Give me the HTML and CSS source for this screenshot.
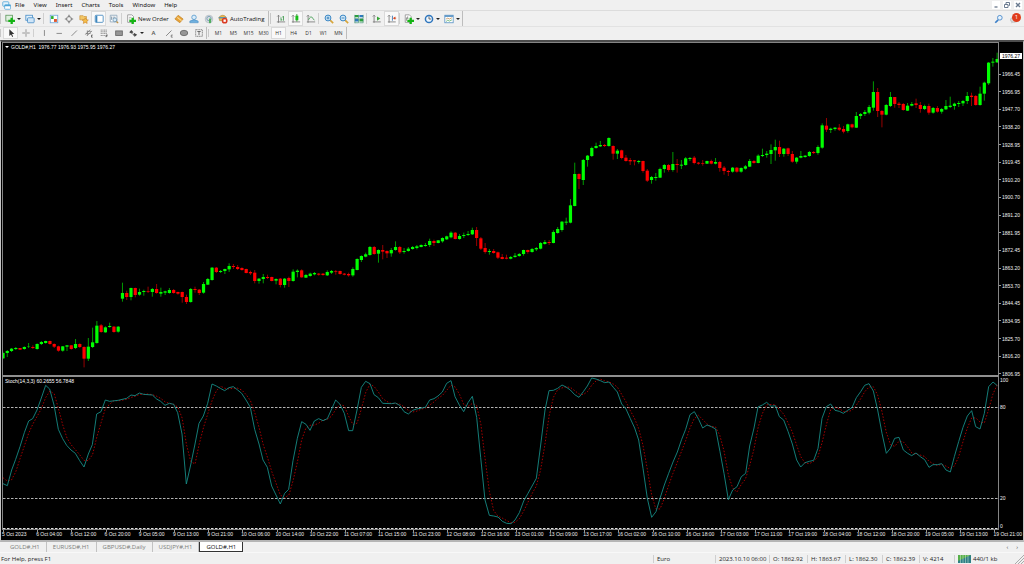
FILE: index.html
```html
<!DOCTYPE html>
<html lang="en">
<head>
<meta charset="utf-8">
<title>GOLD#,H1</title>
<link rel="stylesheet" href="styles.css">
</head>
<body>
<header class="menubar">
  <svg class="app-icon" viewBox="0 0 12 12"><rect x="1" y="1" width="8" height="6" rx="1" fill="#e3f3fc" stroke="#4aa3d6"/><rect x="3.500" y="5" width="8" height="6" rx="1" fill="#fff" stroke="#4aa3d6"/><path d="M3.500 6h8" stroke="#4aa3d6" stroke-width="2"/></svg>
  <nav class="menus">
    <button>File</button><button>View</button><button>Insert</button><button>Charts</button><button>Tools</button><button>Window</button><button>Help</button>
  </nav>
  <div class="window-buttons">
    <button aria-label="Minimize"><svg viewBox="0 0 8 8"><path d="M2.500 6h3" stroke="#5b6b80" stroke-width="1.200"/></svg></button>
    <button aria-label="Restore"><svg viewBox="0 0 8 8"><path d="M3 3V1.500h3.500v3H5.500M1.500 3.500H5v3H1.500z" fill="none" stroke="#6b7b90"/></svg></button>
    <button aria-label="Close"><svg viewBox="0 0 8 8"><path d="M2 2l4 4M6 2L2 6" stroke="#6b7b90" stroke-width="1.400"/></svg></button>
  </div>
</header>

<div class="toolbar main-tools">
  <span class="grip"></span>
  <button class="tool drop" aria-label="New chart"><svg viewBox="0 0 12 12"><rect x="1" y="1.500" width="8" height="7" fill="#dff0df" stroke="#5f9a5f"/><path d="M8 4.500v7.500M4 8.300h8" stroke="#14b414" stroke-width="2.800"/></svg></button>
  <button class="tool drop" aria-label="Profiles"><svg viewBox="0 0 12 12"><rect x="1" y="1.500" width="8" height="6" fill="#e4f1fb" stroke="#4a8fc8"/><rect x="3" y="4.500" width="8" height="6" rx="1" fill="#cfe5f7" stroke="#4a8fc8"/></svg></button>
  <span class="sep"></span>
  <button class="tool" aria-label="Market watch"><svg viewBox="0 0 12 12"><rect x="1.500" y="1.500" width="9" height="9" fill="#fff" stroke="#6fa9d8"/><rect x="2.500" y="2.500" width="3" height="3.500" fill="#2cae2c"/><rect x="6" y="6" width="3.500" height="3.500" fill="#e0562c"/></svg></button>
  <button class="tool" aria-label="Data window"><svg viewBox="0 0 12 12"><circle cx="6" cy="6" r="3" fill="none" stroke="#777"/><path d="M6 1v3M6 8v3M1 6h3M8 6h3" stroke="#777" stroke-width="1.400"/></svg></button>
  <button class="tool" aria-label="Navigator"><svg viewBox="0 0 12 12"><path d="M1 2h4l1 1h3v4H1z" fill="#f3c766" stroke="#c58a2b" stroke-width=".7"/><path d="M7.500 4.500l1.200 2.300 2.500.4-1.800 1.700.4 2.400-2.300-1.200-2.300 1.200.4-2.400-1.800-1.700 2.500-.4z" fill="#f6bf4a" stroke="#c9822a" stroke-width=".7"/></svg></button>
  <button class="tool pressed" aria-label="Terminal"><svg viewBox="0 0 12 12"><rect x="1.500" y="1.500" width="9.500" height="8.500" rx="1" fill="#fff" stroke="#3e86bd"/><path d="M3 2v8" stroke="#3e86bd" stroke-width="2"/></svg></button>
  <button class="tool" aria-label="Strategy tester"><svg viewBox="0 0 12 12"><path d="M1.500 1.500h8v8h-8z" fill="#fff" stroke="#8aa4b8"/><path d="M3 3v4M5 3v3M7 3v2" stroke="#7d93a5"/><circle cx="7" cy="7" r="2.300" fill="#d6ebf8" stroke="#6d94b0"/><path d="M9 9l2 2" stroke="#c09040" stroke-width="1.500"/></svg></button>
  <span class="sep"></span>
  <button class="tool text new-order"><svg viewBox="0 0 12 12"><path d="M2 1h5l2 2v7H2z" fill="#fff" stroke="#888" stroke-width=".9"/><path d="M3.500 4h3M3.500 6h2" stroke="#888" stroke-width=".7"/><path d="M8 4.500v7.500M4 8.300h8" stroke="#14b414" stroke-width="2.800"/></svg>New Order</button>
  <button class="tool" aria-label="MetaEditor"><svg viewBox="0 0 12 12"><path d="M5 1.500l6 4.500-4 4.500-6-4.500z" fill="#e8a236" stroke="#b87a1e" stroke-width=".7"/><path d="M4 4l5 4" stroke="#fbdc96" stroke-width="1.300"/></svg></button>
  <button class="tool" aria-label="Community"><svg viewBox="0 0 12 12"><circle cx="6" cy="4" r="2.700" fill="#d8ecfa" stroke="#5a9bcc"/><path d="M1 10.500V8.500q5-3 10 0v2z" fill="#6fb0de" stroke="#4b8fc4" stroke-width=".7"/></svg></button>
  <button class="tool" aria-label="Signals"><svg viewBox="0 0 12 12"><circle cx="6" cy="6" r="4.600" fill="#d8dee2" stroke="#aab4bb" stroke-width=".8"/><circle cx="6" cy="5.500" r="2.600" fill="none" stroke="#6f95b0"/><path d="M6 5.500h2.500V11H6z" fill="#51ad61"/></svg></button>
  <button class="tool text auto"><svg viewBox="0 0 12 12"><path d="M1 4q5-5 9 0l-1 4H2z" fill="#f0b848" stroke="#a98032" stroke-width=".7"/><path d="M1 4.500h9" stroke="#4a8fc0" stroke-width="1.500"/><circle cx="8" cy="8" r="3.500" fill="#da3a22"/><rect x="6.600" y="6.600" width="2.800" height="2.800" fill="#fff"/></svg>AutoTrading</button>
  <span class="end"></span><span class="grip"></span>
  <button class="tool" aria-label="Bar chart"><svg viewBox="0 0 12 12"><path d="M3 1.500v9M1 9.500h10M1.500 3L3 1.500 4.500 3" fill="none" stroke="#777"/><path d="M6 4v4M9 2.500V8M6 7h1.500M7.500 3.500H9" stroke="#3c9a4c"/></svg></button>
  <button class="tool pressed" aria-label="Candlesticks"><svg viewBox="0 0 12 12"><path d="M2.500 1.500v9M1 9.500h10M1 3l1.500-1.500L4 3" fill="none" stroke="#777"/><path d="M7 0v9" stroke="#2d8a2d"/><rect x="5.300" y="2" width="3.500" height="5.500" fill="#19bd19"/></svg></button>
  <button class="tool" aria-label="Line chart"><svg viewBox="0 0 12 12"><path d="M2.500 1.500v9M1 9.500h10M1 3l1.500-1.500L4 3" fill="none" stroke="#777"/><path d="M3 7q3-6 5-2l2 2.500" fill="none" stroke="#3c9a4c"/></svg></button>
  <span class="sep"></span>
  <button class="tool" aria-label="Zoom in"><svg viewBox="0 0 12 12"><path d="M7 7l4 4" stroke="#d7a53a" stroke-width="2"/><circle cx="4.800" cy="4.800" r="3.500" fill="#d5ebfa" stroke="#3a86c4" stroke-width="1.200"/><path d="M3 4.800h3.600M4.800 3v3.600" stroke="#2873b0"/></svg></button>
  <button class="tool" aria-label="Zoom out"><svg viewBox="0 0 12 12"><path d="M7 7l4 4" stroke="#d7a53a" stroke-width="2"/><circle cx="4.800" cy="4.800" r="3.500" fill="#d5ebfa" stroke="#3a86c4" stroke-width="1.200"/><path d="M3 4.800h3.600" stroke="#2873b0"/></svg></button>
  <button class="tool" aria-label="Tile windows"><svg viewBox="0 0 12 12"><rect x="1" y="1" width="10" height="10" fill="#f5faf5"/><path d="M1 2.500h4.500M6.500 7.500H11" stroke="#2aa03a" stroke-width="2.800"/><path d="M6.500 2.500H11M1 7.500h4.500" stroke="#2d78c0" stroke-width="2.800"/><path d="M1 5.500h4.500V1M6.500 5.500H11V1M1 10.500h4.500V6M6.500 10.500H11V6M1 1v10" fill="none" stroke="#3b8970" stroke-width=".8"/></svg></button>
  <span class="sep"></span>
  <button class="tool" aria-label="Auto scroll"><svg viewBox="0 0 12 12"><path d="M2.500 1.500v9M1 9.500h9.500M1 3l1.500-1.500L4 3" fill="none" stroke="#777"/><path d="M6 3l4 2.500L6 8z" fill="#35a535"/></svg></button>
  <button class="tool pressed" aria-label="Chart shift"><svg viewBox="0 0 12 12"><path d="M2.500 1.500v9M1 9.500h9.500M1 3l1.500-1.500L4 3" fill="none" stroke="#777"/><path d="M6.500 2v6" stroke="#2c6cae"/><path d="M7 5l3-2v4z" fill="#d44a25"/><path d="M9 5h2" stroke="#d44a25"/></svg></button>
  <span class="sep"></span>
  <button class="tool drop" aria-label="Indicators"><svg viewBox="0 0 12 12"><path d="M1.500 1h5l2 2v7h-7z" fill="#fff" stroke="#888" stroke-width=".9"/><path d="M3 8q0-5 2-5M3 5h2.500" fill="none" stroke="#555" stroke-width=".8"/><path d="M8 4.500v7.500M4 8.300h8" stroke="#14b414" stroke-width="2.800"/></svg></button>
  <button class="tool drop" aria-label="Periods"><svg viewBox="0 0 12 12"><circle cx="6" cy="6" r="4.300" fill="#eef6fd" stroke="#2f76bd" stroke-width="1.800"/><path d="M6 3v3h2.500" fill="none" stroke="#444" stroke-width=".9"/></svg></button>
  <button class="tool drop" aria-label="Templates"><svg viewBox="0 0 12 12"><rect x="1" y="1.500" width="10" height="9" fill="#fff" stroke="#5b94c6"/><path d="M1 2.500h10" stroke="#5b94c6" stroke-width="2"/><path d="M2.500 6l2-1 2 1 3-1.500" fill="none" stroke="#b87830" stroke-width=".8"/><path d="M2.500 9l2-1.500 2 1 3-1.500" fill="none" stroke="#3fa04f" stroke-width=".8"/></svg></button>
  <span class="end"></span>
  <span class="fill"></span>
  <button class="tool" aria-label="Search"><svg viewBox="0 0 12 12"><path d="M5 7l-3.500 3.500" stroke="#3a7fc8" stroke-width="2"/><circle cx="7" cy="4.500" r="2.800" fill="#e6f2fc" stroke="#5b95d0" stroke-width="1.200"/></svg></button>
  <button class="tool alerts" aria-label="Notifications"><svg viewBox="0 0 12 12"><ellipse cx="5" cy="7" rx="4.500" ry="3" fill="#dcdcdc" stroke="#b5b5b5" stroke-width=".8"/><path d="M2 9l-1 2.500L4.500 10z" fill="#ccc"/></svg><span class="badge">1</span></button>
</div>

<div class="toolbar line-tools">
  <span class="grip"></span>
  <button class="tool pressed" aria-label="Cursor"><svg viewBox="0 0 12 12"><path d="M4 1.500v8l2-1.800 1.500 3 1-.6L7.200 7.200H10z" fill="#333"/></svg></button>
  <button class="tool" aria-label="Crosshair"><svg viewBox="0 0 12 12"><path d="M6 1.500v4M6 6.500v4M1.500 6h4M6.500 6h4" stroke="#888"/></svg></button>
  <span class="sep"></span>
  <button class="tool" aria-label="Vertical line"><svg viewBox="0 0 12 12"><path d="M6.500 2.500v7" stroke="#777"/></svg></button>
  <button class="tool" aria-label="Horizontal line"><svg viewBox="0 0 12 12"><path d="M3 6.500h6.500" stroke="#777"/></svg></button>
  <button class="tool" aria-label="Trend line"><svg viewBox="0 0 12 12"><path d="M3 9.500l6.500-6.500" stroke="#777"/></svg></button>
  <button class="tool" aria-label="Equidistant channel"><svg viewBox="0 0 12 12"><path d="M1.500 8l6-6M3.500 9.500l6-6M2 6.500h6M4 4h5M4 3v6" stroke="#777" stroke-width=".9"/><path d="M10.500 8.500H9V11h1.500" fill="none" stroke="#444" stroke-width=".9"/></svg></button>
  <button class="tool" aria-label="Fibonacci retracement"><svg viewBox="0 0 12 12"><path d="M2 2.500h8M2 4.500h8M2 6.500h8M2 9h5" stroke="#777" stroke-width=".9" stroke-dasharray="1.500 .5"/><path d="M8.500 11V8.500h2M8.500 9.700h1.500" fill="none" stroke="#444" stroke-width=".9"/></svg></button>
  <button class="tool" aria-label="Rectangle"><svg viewBox="0 0 12 12"><rect x="2" y="3.500" width="8" height="5.500" fill="#969696" stroke="#666"/></svg></button>
  <button class="tool drop" aria-label="Arrows"><svg viewBox="0 0 12 12"><path d="M1.500 5L4 2.500 6.500 5 4 6.500zM6 8l1.500-2L11 8l-3 2.500z" fill="#444"/><path d="M4 6l4 3" stroke="#777"/></svg></button>
  <button class="tool letter">A</button>
  <button class="tool" aria-label="Line by angle"><svg viewBox="0 0 12 12"><path d="M2.500 9.500L9 3" stroke="#777"/><path d="M10.500 8.500H8.700V11h1.800" fill="none" stroke="#555" stroke-width=".8"/></svg></button>
  <button class="tool" aria-label="Ellipse"><svg viewBox="0 0 12 12"><ellipse cx="6" cy="6" rx="4.500" ry="3.200" fill="#969696" stroke="#666"/></svg></button>
  <button class="tool" aria-label="Text label"><svg viewBox="0 0 12 12"><rect x="2" y="2" width="8" height="8" fill="none" stroke="#777" stroke-dasharray="1.500 .6"/><path d="M4 4.200h4M6 4.200V8.500" stroke="#555"/></svg></button>
  <span class="end"></span><span class="grip"></span>
  <button class="tool period">M1</button><button class="tool period">M5</button><button class="tool period">M15</button><button class="tool period">M30</button><button class="tool period pressed">H1</button><button class="tool period">H4</button><button class="tool period">D1</button><button class="tool period">W1</button><button class="tool period">MN</button>
  <span class="end"></span>
</div>

<main class="chart">
  <section class="pane price-pane">
    <svg id="candles" viewBox="3 43 995 332" preserveAspectRatio="none"></svg>
    <p class="caption"><span class="caret"></span>GOLD#,H1 &nbsp;1976.77 1976.93 1975.95 1976.27</p>
  </section>
  <div class="axis">
    <span class="last-price">1976.27</span>
    <ul class="prices">
      <li>1966.45</li><li>1956.95</li><li>1947.70</li><li>1938.20</li><li>1928.95</li><li>1919.45</li><li>1910.20</li><li>1900.70</li><li>1891.20</li><li>1881.95</li><li>1872.45</li><li>1863.20</li><li>1853.70</li><li>1844.45</li><li>1834.95</li><li>1825.70</li><li>1816.20</li><li>1806.95</li>
    </ul>
  </div>
  <section class="pane stoch-pane">
    <svg id="stoch" viewBox="3 377 995 152" preserveAspectRatio="none"></svg>
    <p class="caption">Stoch(14,3,3) 60.2655 56.7848</p>
  </section>
  <ul class="levels"><li>100</li><li>80</li><li>20</li><li>0</li></ul>
  <ol class="times" id="times"></ol>
</main>

<nav class="tabs">
  <button>GOLD#,H1</button><button>EURUSD#,H1</button><button>GBPUSD#,Daily</button><button>USDJPY#,H1</button><button class="active">GOLD#,H1</button>
  <span class="fill"></span>
  <button class="arrow" aria-label="Previous">‹</button><button class="arrow" aria-label="Next">›</button>
</nav>

<footer class="status">
  <span class="help">For Help, press F1</span>
  <span class="symbol">Euro</span>
  <span class="date">2023.10.10 06:00</span>
  <span class="open">O: 1862.92</span>
  <span class="high">H: 1863.67</span>
  <span class="low">L: 1862.30</span>
  <span class="close">C: 1862.39</span>
  <span class="volume">V: 4214</span>
  <span class="traffic"><svg viewBox="0 0 13 8"><path d="M0 0h13v8H0z" fill="#2f7f86"/><path d="M0 0h13L0 6z" fill="#58b04a"/><path d="M2.500 0v8M5 0v8M7.500 0v8M10 0v8" stroke="#d9ecd9" stroke-width=".5"/></svg>440/1 kb</span>
  <svg class="resize" viewBox="0 0 9 9"><path d="M0 9L9 0M3 9l6-6M6 9l3-3" stroke="#aaa"/></svg>
</footer>
<script src="chart.js"></script>
</body>
</html>
```
FILE: styles.css
```css
* { box-sizing: border-box; }
body {
  margin: 0;
  height: 100vh;
  display: flex;
  flex-direction: column;
  overflow: hidden;
  background: #f0f0f0;
  color: #111;
  font: 6px/8px "Open Sans", "Noto Sans", sans-serif;
}
button {
  font: inherit;
  color: inherit;
  border: 0;
  margin: 0;
  padding: 0;
  background: none;
}
ul, ol, p { margin: 0; padding: 0; list-style: none; }
svg { display: block; }
.fill { flex: 1; }

.menubar {
  display: flex;
  align-items: center;
  height: 11px;
  flex: none;
  padding: 0 2px;
  border-bottom: 1px solid #dcdcdc;
}
.app-icon { width: 9px; height: 9px; }
.menus {
  display: flex;
  flex: 1;
  gap: 9px;
  padding-left: 4px;
  font-family: "Noto Sans", "Open Sans", sans-serif;
}
.window-buttons { display: flex; gap: 3px; }
.window-buttons button { width: 8px; height: 8px; background: #fff; }
.window-buttons svg { width: 8px; height: 8px; }

.toolbar { display: flex; align-items: stretch; flex: none; }
.main-tools { height: 15px; }
.line-tools { height: 13px; margin-bottom: 1px; border-top: 1px solid #e2e2e2; }
.tool {
  position: relative;
  display: flex;
  flex: none;
  align-items: center;
  justify-content: center;
  width: 15px;
}
.tool svg { width: 10px; height: 10px; flex: none; }
.pressed { background: #f9f9f9; border: 1px solid #dadada; }
.drop { width: 20px; justify-content: flex-start; padding-left: 2px; gap: 2px; }
.drop::after {
  content: "";
  border: 2px solid transparent;
  border-top-color: #222;
  border-bottom: 0;
}
.text { gap: 2px; justify-content: flex-start; padding-left: 2px; }
.new-order { width: 47px; }
.auto { width: 52px; }
.grip { width: 3px; margin: 2px 0; border-left: 1px solid #c8c8c8; flex: none; }
.sep { width: 3px; flex: none; margin: 2px 0; border-left: 1px solid #cfcfcf; }
.end { width: 2px; flex: none; border-left: 1px solid #bdbdbd; }
.letter { color: #555; font-weight: 600; }
.period { font-size: 5px; color: #333; }
.alerts { width: 18px; }
.badge {
  position: absolute;
  top: 2px;
  right: 3px;
  width: 9px;
  height: 9px;
  border-radius: 50%;
  background: #e03c1c;
  color: #fff;
  line-height: 9px;
  text-align: center;
}

.chart {
  flex: 1;
  min-height: 0;
  display: grid;
  grid-template-columns: minmax(0, 1fr) 24px;
  grid-template-rows: minmax(0, 335fr) minmax(0, 153fr) 10px;
  background: #000;
  color: #f0f0f0;
  font: 5px/6px "Liberation Sans", Arial, sans-serif;
  border: 1px solid #c4c4c4;
  border-top: 2px solid #4c4c4c;
  border-bottom: 2px solid #b5b5b5;
  padding-left: 1px;
  overflow: hidden;
}
.pane {
  position: relative;
  min-height: 0;
  border: 1px solid #858585;
}
.pane svg { width: 100%; height: 100%; }
.price-pane { border-bottom: 2px solid #909090; }
.stoch-pane { border-top: 0; }
.caption { position: absolute; top: 1px; left: 2px; color: #fff; }
.price-pane .caption { display: flex; align-items: center; }
.caret {
  margin-right: 2px;
  border: 2px solid transparent;
  border-top-color: #fff;
  border-bottom: 0;
}
.axis { position: relative; display: flex; padding-top: 29px; }
.prices {
  flex: 1;
  display: flex;
  flex-direction: column;
  justify-content: space-between;
}
.prices li, .levels li { display: flex; align-items: center; gap: 1px; }
.prices li::before { content: ""; width: 2px; height: 1px; background: #999; }
.last-price {
  position: absolute;
  top: 11px;
  left: 1px;
  right: 1px;
  padding-left: 2px;
  background: #fff;
  color: #000;
}
.levels {
  display: grid;
  grid-template-rows: 27fr 91fr 28fr 7px;
  align-items: start;
  padding-left: 1px;
}
.times {
  display: grid;
  grid-template-columns: repeat(30, 3.43%);
  white-space: nowrap;
  line-height: 9px;
}
.times li { position: relative; }
.times li::before {
  content: "";
  position: absolute;
  top: 0;
  left: 1px;
  width: 1px;
  height: 2px;
  background: #999;
}

.tabs {
  display: flex;
  flex: none;
  height: 10px;
  padding: 0 2px 0 4px;
  color: #7c7f7c;
}
.tabs button { padding: 0 6px; border-right: 1px solid #c2c2c2; line-height: 8px; }
.tabs .active {
  background: #fff;
  color: #111;
  border: 1px solid #333;
  border-top: 0;
}
.tabs .arrow { padding: 0 4px; border: 0; color: #444; }

.status {
  display: flex;
  flex: none;
  align-items: center;
  height: 12px;
  border-top: 1px solid #f8f8f8;
  color: #222;
  white-space: nowrap;
}
.status span { flex: none; border-left: 1px solid #cfcfcf; padding-left: 3px; }
.status .help { flex: 1; border: 0; padding-left: 1px; }
.symbol { width: 62px; }
.date { width: 54px; }
.open, .high { width: 38px; }
.low, .close { width: 37px; }
.volume { width: 35px; }
.status .traffic { display: flex; align-items: center; gap: 2px; width: 61px; }
.traffic svg { width: 13px; height: 8px; }
.resize { width: 9px; height: 9px; align-self: flex-end; }
```
FILE: chart.js
```js
const NS = "http://www.w3.org/2000/svg";
const STEP = 12.8 / 3;
const FIRST_X = 3;

function add(parent, name, attrs) {
  const el = document.createElementNS(NS, name);
  for (const key in attrs) el.setAttribute(key, attrs[key]);
  parent.appendChild(el);
}

// Bars: direction, body top, body bottom, high, low; three units per pixel below the base.
const sessions = [
  { base: 250, bars: `g 309 325 305 327,g 303 309 300 321,g 296 303 294 306,g 294 297 291 300,r 294 299 294 299,g 291 297 289 299,g 290 291 279 294,r 291 294 286 297,g 282 297 280 299,g 276 282 273 285,g 273 279 272 281,r 273 282 272 284,r 282 290 280 294,r 289 302 287 305,g 289 302 288 305,g 286 290 285 303,r 286 297 285 299,g 282 294 267 297,r 282 291 280 294,r 291 326 289 352,g 290 326 264 333,g 277 291 233 294,g 227 279 213 281,r 226 246 222 248,g 232 247 229 248,g 228 231 218 233,r 230 246 228 248,g 230 245 228 248,g 129 146 98 155,r 129 141 122 150,g 114 141 113 151,r 114 135 113 142,g 126 134 116 137,g 123 126 119 137,r 123 125 110 129,g 117 126 114 140,r 117 129 102 131,g 126 131 113 140,g 124 128 122 135,g 120 129 114 131,r 120 129 117 131,r 126 131 125 134,r 126 141 125 158,r 141 156 134 162,g 117 156 114 158,r 117 120 110 128,r 119 129 117 135,g 102 128 96 131,g 87 104 84 105,g 53 90 51 92,r 53 66 51 69,g 63 66 60 69,g 57 63 56 72,g 48 58 40 66,r 48 51 42 57,r 51 57 45 60,r 54 60 52 62,r 57 69 56 70,r 66 70 62 75,r 68 93 60 100` },
  { base: 210, bars: `g 206 213 204 221,g 201 207 192 220,r 201 204 194 207,r 201 213 200 214,g 207 212 205 223,r 206 225 204 232,g 206 225 204 233,r 204 213 200 231,g 185 213 178 215,g 182 186 178 202,r 181 202 178 203,g 195 203 192 204,g 191 198 188 200,g 189 193 186 196,r 191 194 189 197,r 191 195 189 197,g 186 196 181 198,g 183 188 180 192,r 183 185 180 194,r 183 192 182 194,r 191 194 189 196,r 192 196 188 200,g 177 196 172 200,g 147 180 145 181,g 138 150 136 156,g 133 140 128 142,g 111 135 108 137,r 111 132 108 134,g 120 131 118 158,r 120 125 105 148,r 123 130 121 144,g 120 130 114 140,g 111 120 94 122,r 111 127 108 132,g 123 126 114 131,g 116 123 111 125,g 111 117 108 119,g 109 114 105 118,g 105 111 103 112,g 105 108 99 110,g 93 105 86 111,r 93 99 89 108,g 91 99 90 100,g 84 94 82 98,g 79 88 77 90,g 68 82 64 85,r 68 87 66 88,g 78 87 72 89,g 75 78 68 84,g 72 75 63 78,g 60 73 53 75,r 60 84 51 108,r 85 116 81 120,r 114 126 99 131,g 123 126 117 134,r 123 129 117 131,r 127 143 125 147,r 141 147 132 148` },
  { base: 120, bars: `r 413 416 404 418,g 411 416 408 418,g 407 411 399 413,g 402 408 399 410,g 390 402 389 407,r 390 396 389 401,g 387 396 384 398,g 384 388 381 393,g 369 386 366 388,g 366 372 360 374,r 366 369 360 375,g 336 369 331 370,g 327 339 321 341,g 305 330 303 335,g 305 308 293 315,g 256 308 237 310,g 162 258 128 259,r 162 177 160 207,g 120 180 117 195,g 107 120 105 140,g 84 108 80 111,g 78 84 68 86,g 75 79 63 81,r 75 78 72 81,g 54 78 52 80,r 78 101 76 119,g 92 101 87 117,r 91 114 89 118,r 113 123 105 125,r 120 124 114 135,r 121 124 120 136,g 123 126 120 131,r 123 153 122 158,r 152 182 147 186,g 171 180 168 191,g 171 174 159 182,g 147 173 143 174,g 135 147 132 158,r 135 150 132 155,g 132 150 96 155,r 132 135 117 158,g 134 137 120 147,g 115 135 111 137,g 114 117 111 123,r 113 129 108 133,r 128 131 126 134,r 129 131 120 137,g 123 131 122 132,r 123 131 119 133,g 126 131 114 133,r 126 144 123 155,r 143 153 138 164,r 153 156 150 168,g 143 155 141 158` },
  { base: 50, bars: `r 353 365 351 368,g 354 365 352 368,g 349 356 345 359,g 333 350 327 351,r 333 339 330 341,g 317 339 313 340,g 315 318 296 321,g 311 315 303 323,g 300 312 283 342,g 291 301 269 332,r 291 312 272 321,g 296 312 294 320,r 295 312 293 318,r 312 335 303 338,g 323 335 321 341,g 318 323 303 325,g 317 321 315 323,g 306 318 303 320,r 306 309 303 312,g 291 309 286 314,g 226 293 220 296,r 227 239 204 246,g 236 240 233 249,g 233 237 231 242,r 233 239 222 243,r 237 245 228 250,g 223 243 221 248,r 223 232 221 235,g 198 233 186 234,g 192 198 189 207,g 186 192 180 198,g 171 188 165 193,g 126 173 94 182,r 126 183 114 201,r 183 194 180 232,g 165 194 162 196,g 141 168 126 171,r 141 162 141 173,r 161 165 156 174,r 162 180 159 182,g 167 182 159 183,g 162 167 156 169,r 160 165 146 174,r 165 177 156 188,g 168 177 164 180,r 168 188 161 194,g 174 188 171 191,r 174 185 168 188,g 177 185 174 191,g 168 178 150 180,g 167 171 140 174,g 161 168 158 179,g 159 162 153 171,g 153 160 150 168,g 138 153 126 162,r 137 141 128 168,r 138 165 135 167,g 131 165 110 167,g 98 131 95 152,g 38 100 36 105,g 35 38 24 50,g 27 37 8 39` }
];

const candles = document.getElementById("candles");
let index = 0;
for (const session of sessions) {
  for (const bar of session.bars.split(",")) {
    const [dir, ...values] = bar.split(" ");
    const [top, bottom, high, low] = values.map(v => session.base + v / 3);
    const x = FIRST_X + index * STEP;
    add(candles, "rect", { x: x - 0.5, y: high, width: 1, height: low - high, fill: dir === "g" ? "#009a00" : "#960000" });
    add(candles, "rect", { x: x - 1.6, y: top, width: 3.2, height: bottom - top, fill: dir === "g" ? "#00ff00" : "#ff0000" });
    index++;
  }
}

// %K line, three units per pixel, measured from the top left of the pane.
const k = `-17,317 -4,311 9,341 22,347 35,300 47,268 60,230 73,188 86,153 98,146 111,120 124,84 137,46 149,57 162,105 175,178 188,206 200,226 213,240 226,250 239,272 252,291 265,252 277,224 290,132 303,125 316,90 329,94 354,91 380,85 393,75 405,77 418,69 431,73 457,75 470,87 482,94 495,106 508,100 521,103 533,128 546,192 559,342 572,285 585,222 597,160 610,138 623,100 636,42 649,48 661,55 674,62 687,53 700,50 713,60 725,70 738,90 751,112 764,178 777,222 789,270 802,292 815,348 828,375 841,402 854,370 866,358 879,272 892,205 905,155 918,163 930,181 943,153 956,146 969,152 982,146 995,117 1007,90 1020,103 1033,130 1046,182 1058,182 1071,120 1084,52 1097,34 1110,41 1122,74 1135,83 1148,100 1174,101 1186,99 1199,106 1212,125 1225,132 1238,121 1250,117 1276,112 1289,90 1302,86 1314,78 1327,66 1340,40 1353,32 1365,80 1378,105 1391,125 1404,98 1417,79 1430,142 1442,262 1455,390 1468,436 1481,438 1494,441 1507,454 1520,460 1533,461 1545,450 1558,428 1571,393 1584,370 1609,325 1622,225 1635,120 1647,62 1660,61 1673,55 1686,45 1698,51 1711,60 1724,74 1737,82 1750,65 1762,48 1775,24 1788,27 1801,32 1814,38 1827,36 1840,52 1852,66 1865,102 1878,117 1891,146 1904,174 1916,210 1929,295 1942,385 1955,442 1968,425 1980,385 1993,345 2006,310 2019,276 2032,246 2045,208 2057,178 2070,134 2083,125 2096,148 2108,174 2121,165 2134,170 2147,177 2160,245 2172,310 2185,389 2198,360 2211,350 2224,320 2237,310 2249,228 2262,174 2274,111 2287,105 2300,97 2313,109 2326,107 2338,140 2351,150 2364,184 2377,222 2390,270 2402,291 2415,278 2428,274 2441,271 2454,235 2466,145 2479,110 2492,102 2505,121 2518,124 2530,130 2543,121 2556,113 2569,83 2582,65 2594,46 2607,41 2620,63 2633,120 2646,190 2659,250 2671,235 2684,205 2697,202 2710,240 2723,250 2735,257 2748,249 2761,260 2774,269 2787,292 2799,284 2812,284 2825,281 2838,300 2851,306 2863,260 2876,215 2889,172 2902,138 2915,122 2927,170 2940,177 2953,130 2966,50 2979,36 2992,47`
  .split(" ").map(pair => pair.split(",").map(v => v / 3)).map(([x, y]) => [x, y + 370]);

function kAt(x) {
  const right = k.findIndex(point => point[0] >= x);
  if (right < 0) return k[k.length - 1][1];
  if (right === 0) return k[0][1];
  const [x0, y0] = k[right - 1];
  const [x1, y1] = k[right];
  return y0 + (y1 - y0) * (x - x0) / (x1 - x0);
}

const stoch = document.getElementById("stoch");
for (const y of [407.5, 498.5, 528.5]) {
  add(stoch, "line", { x1: 3, x2: 998, y1: y, y2: y, stroke: y > 500 ? "#e0e0e0" : "#b4b4b4", "stroke-width": 1, "stroke-dasharray": "2.500 1.500" });
}
// %D is the three-bar average of %K.
const d = [];
for (let i = 0; i < index; i++) {
  const x = FIRST_X + i * STEP;
  d.push([x, (kAt(x) + kAt(x - STEP) + kAt(x - 2 * STEP)) / 3]);
}
add(stoch, "polyline", { points: d.join(" "), fill: "none", stroke: "#d00000", "stroke-width": 0.8, "stroke-dasharray": "1.500 1.700" });
add(stoch, "polyline", { points: k.slice(2).join(" "), fill: "none", stroke: "#168a84", "stroke-width": 0.9 });

const times = ["5 Oct 2023", "6 Oct 04:00", "6 Oct 12:00", "6 Oct 20:00", "9 Oct 05:00", "9 Oct 13:00", "9 Oct 21:00", "10 Oct 06:00", "10 Oct 14:00", "10 Oct 22:00", "11 Oct 07:00", "11 Oct 15:00", "11 Oct 23:00", "12 Oct 08:00", "12 Oct 16:00", "13 Oct 01:00", "13 Oct 09:00", "13 Oct 17:00", "16 Oct 02:00", "16 Oct 10:00", "16 Oct 18:00", "17 Oct 03:00", "17 Oct 11:00", "17 Oct 19:00", "18 Oct 04:00", "18 Oct 12:00", "18 Oct 20:00", "19 Oct 05:00", "19 Oct 13:00", "19 Oct 21:00"];
for (const time of times) {
  const item = document.createElement("li");
  item.textContent = time;
  document.getElementById("times").appendChild(item);
}
```
